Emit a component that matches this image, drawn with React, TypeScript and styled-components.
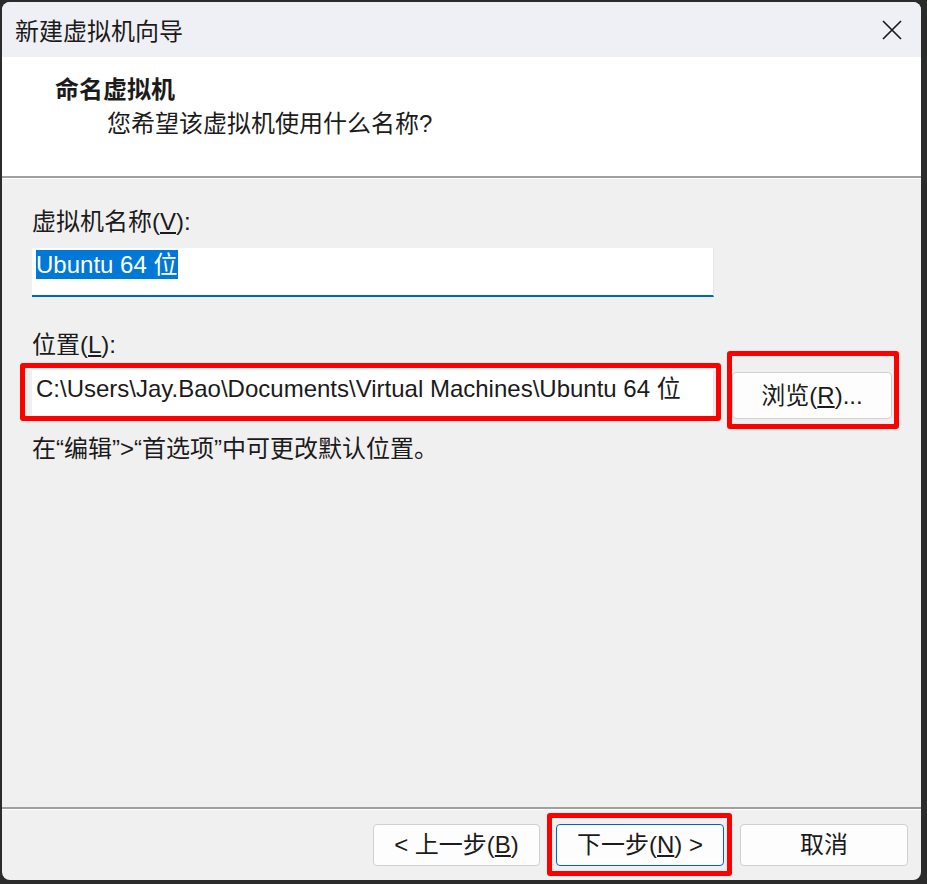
import React from 'react';
import styled, { createGlobalStyle } from 'styled-components';

const GlobalStyle = createGlobalStyle`
  html, body {
    margin: 0;
    padding: 0;
    background: #2b2b2b;
  }
  body {
    font-family: 'Liberation Sans', 'Noto Sans CJK SC', sans-serif;
    color: #1b1b1b;
  }
  * {
    box-sizing: border-box;
  }
`;

const Screen = styled.div`
  width: 927px;
  height: 884px;
  padding: 2px 6px 4px 2px;
  display: flex;
`;

const Window = styled.div`
  flex: 1;
  display: flex;
  flex-direction: column;
  background: #f0f0f0;
  border-radius: 8px;
  overflow: hidden;
`;

const TitleBar = styled.div`
  height: 55px;
  flex-shrink: 0;
  display: flex;
  align-items: center;
  justify-content: space-between;
  background: #eff0f5;
  padding: 0 19px 0 13px;
`;

const TitleText = styled.div`
  font-family: 'Noto Sans CJK SC', sans-serif;
  font-size: 24px;
  line-height: 32px;
`;

const CloseIcon = () => (
  <svg width="20" height="20" viewBox="0 0 20 20">
    <path d="M1 1 L19 19 M19 1 L1 19" stroke="#1b1b1b" strokeWidth="1.7" fill="none" />
  </svg>
);

// 상단 흰색 안내 영역
const Header = styled.div`
  height: 121px;
  flex-shrink: 0;
  background: #fff;
  border-bottom: 2px solid #a0a0a0;
  padding: 15px 0 0 53px;
`;

const HeaderTitle = styled.div`
  font-family: 'Noto Sans CJK SC', sans-serif;
  font-size: 24px;
  font-weight: 700;
  line-height: 32px;
`;

const HeaderSub = styled.div`
  font-size: 24px;
  line-height: 32px;
  margin: 4px 0 0 52px;
`;

const Body = styled.div`
  flex: 1;
  border-top: 1px solid #fff;
  padding: 27px 0 0 30px;
  display: flex;
  flex-direction: column;
  align-items: flex-start;
`;

const Label = styled.div<{ $gap: number }>`
  font-size: 24px;
  line-height: 32px;
  margin-top: ${p => p.$gap}px;
`;

const Field = styled.div<{ $focused?: boolean; $gap?: number }>`
  width: 682px;
  height: ${p => (p.$focused ? 49 : 47)}px;
  margin-top: ${p => p.$gap ?? 0}px;
  background: #fff;
  border-right: 1px solid #e6e6e6;
  border-bottom: ${p => (p.$focused ? '2px solid #0067c0' : 'none')};
  padding: ${p => (p.$focused ? 2 : 4)}px 0 0 4px;
  font-size: 24px;
  line-height: 29px;
  white-space: nowrap;
  overflow: hidden;
`;

const Selected = styled.span`
  display: inline-block;
  height: 29px;
  padding-right: 1px;
  background: #0078d7;
  color: #fff;
`;

const Row = styled.div`
  display: flex;
  align-items: flex-start;
  gap: 18px;
  margin-top: 9px;
`;

const Hint = styled.div`
  font-size: 24px;
  line-height: 32px;
  margin-top: 14px;
`;

// 빨간 표시 테두리 (스크린샷 주석)
const Marked = styled.div<{ $inset: string; $top?: number }>`
  position: relative;
  margin-top: ${p => p.$top ?? 0}px;
  &::after {
    content: '';
    position: absolute;
    inset: ${p => p.$inset};
    border: 5px solid #ff0000;
    border-radius: 3px;
    pointer-events: none;
  }
`;

const Button = styled.div<{ $w: number; $h: number; $primary?: boolean }>`
  width: ${p => p.$w}px;
  height: ${p => p.$h}px;
  display: flex;
  align-items: center;
  justify-content: center;
  background: #fdfdfd;
  border: 1px solid ${p => (p.$primary ? '#0067c0' : '#d0d0d0')};
  border-radius: 4px;
  font-size: 24px;
  line-height: 32px;
  white-space: nowrap;
`;

const Footer = styled.div`
  flex-shrink: 0;
  border-top: 2px solid #a0a0a0;
  box-shadow: inset 0 1px 0 #fff;
  padding: 15px 13px 14px 0;
  display: flex;
  justify-content: flex-end;
  gap: 16px;
`;

const App: React.FC = () => {
  return (
    <>
      <GlobalStyle />
      <Screen>
        <Window>
          <TitleBar>
            <TitleText>新建虚拟机向导</TitleText>
            <CloseIcon />
          </TitleBar>
          <Header>
            <HeaderTitle>命名虚拟机</HeaderTitle>
            <HeaderSub>您希望该虚拟机使用什么名称?</HeaderSub>
          </Header>
          <Body>
            <Label $gap={0}>虚拟机名称(<u>V</u>):</Label>
            <Field $focused $gap={10}>
              <Selected>Ubuntu 64 位</Selected>
            </Field>
            <Label $gap={32}>位置(<u>L</u>):</Label>
            <Row>
              <Marked $inset="-7px -7px -4px -12px">
                <Field>C:\Users\Jay.Bao\Documents\Virtual Machines\Ubuntu 64 位</Field>
              </Marked>
              <Marked $inset="-21px -7px -10px -5px" $top={2}>
                <Button $w={160} $h={47}>浏览(<u>R</u>)...</Button>
              </Marked>
            </Row>
            <Hint>在“编辑”&gt;“首选项”中可更改默认位置。</Hint>
          </Body>
          <Footer>
            <Button $w={167} $h={42}>&lt; 上一步(<u>B</u>)</Button>
            <Marked $inset="-11px -8px -10px -9px">
              <Button $w={168} $h={42} $primary>下一步(<u>N</u>) &gt;</Button>
            </Marked>
            <Button $w={168} $h={42}>取消</Button>
          </Footer>
        </Window>
      </Screen>
    </>
  );
};

export default App;
